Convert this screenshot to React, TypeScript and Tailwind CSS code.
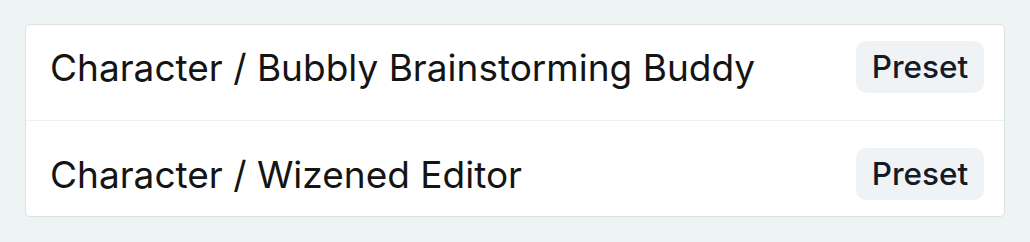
import React from "react";

export default function App() {
  const Badge = () => (
    <span className="h-[52px] w-[128px] flex items-center justify-center rounded-[10px] bg-[#f0f3f6] text-[31.5px] text-[#141a26] font-medium leading-none">
      Preset
    </span>
  );
  return (
    <div className="w-[1030px] h-[242px] bg-[#eef3f3] pt-[24px] pl-[25px]" style={{ fontFamily: "Inter, 'Noto Sans', sans-serif" }}>
      <div className="w-[980px] bg-white border border-[#dce2e2] rounded-[5px] flex flex-col">
        <div className="flex items-center justify-between pl-[24px] pr-[20px] pt-[16px] pb-[27px] border-b border-[#eef1f1]">
          <span className="text-[37px] text-[#141414] leading-none">Character / Bubbly Brainstorming Buddy</span>
          <Badge />
        </div>
        <div className="flex items-center justify-between pl-[24px] pr-[20px] pt-[27px] pb-[16px]">
          <span className="text-[37px] text-[#141414] leading-none">Character / Wizened Editor</span>
          <Badge />
        </div>
      </div>
    </div>
  );
}
